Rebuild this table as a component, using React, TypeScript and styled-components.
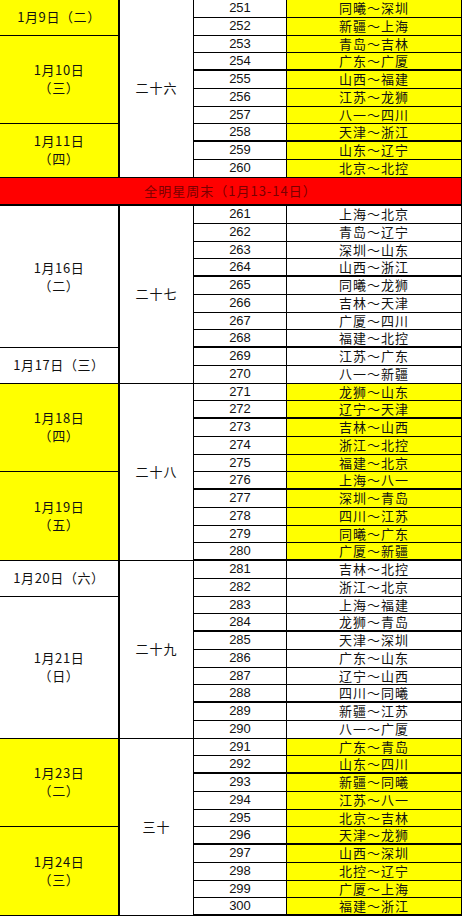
import React from "react";
import styled, { createGlobalStyle } from "styled-components";

const GlobalStyle = createGlobalStyle`
  html, body {
    margin: 0;
    padding: 0;
    background: #fff;
  }
`;

const YELLOW = "#ffff00";

interface Day {
  lines: string[];
  from: number;
  to: number;
  yellow: boolean;
}

const days: Day[] = [
  { lines: ["1月9日（二）"], from: 251, to: 252, yellow: true },
  { lines: ["1月10日", "（三）"], from: 253, to: 257, yellow: true },
  { lines: ["1月11日", "（四）"], from: 258, to: 260, yellow: true },
  { lines: ["1月16日", "（二）"], from: 261, to: 268, yellow: false },
  { lines: ["1月17日（三）"], from: 269, to: 270, yellow: false },
  { lines: ["1月18日", "（四）"], from: 271, to: 275, yellow: true },
  { lines: ["1月19日", "（五）"], from: 276, to: 280, yellow: true },
  { lines: ["1月20日（六）"], from: 281, to: 282, yellow: false },
  { lines: ["1月21日", "（日）"], from: 283, to: 290, yellow: false },
  { lines: ["1月23日", "（二）"], from: 291, to: 295, yellow: true },
  { lines: ["1月24日", "（三）"], from: 296, to: 300, yellow: true },
];

const rounds = [
  { name: "二十六", from: 251, to: 260 },
  { name: "二十七", from: 261, to: 270 },
  { name: "二十八", from: 271, to: 280 },
  { name: "二十九", from: 281, to: 290 },
  { name: "三十", from: 291, to: 300 },
];

const matches = [
  "同曦～深圳", "新疆～上海", "青岛～吉林", "广东～广厦", "山西～福建",
  "江苏～龙狮", "八一～四川", "天津～浙江", "山东～辽宁", "北京～北控",
  "上海～北京", "青岛～辽宁", "深圳～山东", "山西～浙江", "同曦～龙狮",
  "吉林～天津", "广厦～四川", "福建～北控", "江苏～广东", "八一～新疆",
  "龙狮～山东", "辽宁～天津", "吉林～山西", "浙江～北控", "福建～北京",
  "上海～八一", "深圳～青岛", "四川～江苏", "同曦～广东", "广厦～新疆",
  "吉林～北控", "浙江～北京", "上海～福建", "龙狮～青岛", "天津～深圳",
  "广东～山东", "辽宁～山西", "四川～同曦", "新疆～江苏", "八一～广厦",
  "广东～青岛", "山东～四川", "新疆～同曦", "江苏～八一", "北京～吉林",
  "天津～龙狮", "山西～深圳", "北控～辽宁", "广厦～上海", "福建～浙江",
];

// grid row of a game; the all-star banner sits on row 11
const rowOf = (n: number) => (n <= 260 ? n - 250 : n - 249);
const isThick = (n: number) => (n <= 260 ? (n - 250) % 4 === 0 : n % 4 === 0);
const isYellowGame = (n: number) =>
  (n >= 251 && n <= 260) || (n >= 271 && n <= 280) || (n >= 291 && n <= 300);

const Sheet = styled.div`
  display: grid;
  grid-template-columns: 120px 74px 93px 175px;
  grid-template-rows: repeat(10, 17.75px) 28.5px repeat(40, 17.75px);
  width: 462px;
  font-family: "Noto Sans CJK SC", "Noto Sans", sans-serif;
  font-size: 13px;
  line-height: 14px;
  color: #111;
`;

const Cell = styled.div<{ $row: number; $span?: number }>`
  grid-row: ${(p) => p.$row} / span ${(p) => p.$span ?? 1};
  box-sizing: border-box;
  display: flex;
  align-items: center;
  justify-content: center;
  text-align: center;
  border-bottom: 1px solid #000;
  border-right: 1px solid #000;
  white-space: nowrap;
`;

const DateCell = styled(Cell)<{ $yellow: boolean }>`
  grid-column: 1;
  flex-direction: column;
  line-height: 18px;
  letter-spacing: 0.6px;
  border-right: 2px solid #000;
  background: ${(p) => (p.$yellow ? YELLOW : "#fff")};
`;

const RoundCell = styled(Cell)`
  grid-column: 2;
  letter-spacing: 1px;
  background: #fff;
`;

const NumCell = styled(Cell)<{ $thick: boolean }>`
  grid-column: 3;
  font-family: "Liberation Sans", Arial, sans-serif;
  font-size: 13px;
  background: #fff;
  border-bottom-width: ${(p) => (p.$thick ? 2 : 1)}px;
`;

const MatchCell = styled(Cell)<{ $thick: boolean; $yellow: boolean }>`
  grid-column: 4;
  letter-spacing: 1px;
  background: ${(p) => (p.$yellow ? YELLOW : "#fff")};
  border-bottom-width: ${(p) => (p.$thick ? 2 : 1)}px;
`;

const Banner = styled(Cell)`
  grid-column: 1 / -1;
  background: #ff0000;
  color: #7a0000;
  letter-spacing: 1px;
  border-bottom: 2px solid #000;
`;

export default function App() {
  const games = matches.map((m, i) => ({ n: 251 + i, match: m }));

  return (
    <>
      <GlobalStyle />
      <Sheet>
        {days.map((d) => (
          <DateCell
            key={d.lines[0]}
            $row={rowOf(d.from)}
            $span={rowOf(d.to) - rowOf(d.from) + 1}
            $yellow={d.yellow}
          >
            {d.lines.map((l) => (
              <span key={l}>{l}</span>
            ))}
          </DateCell>
        ))}

        {rounds.map((r) => (
          <RoundCell
            key={r.name}
            $row={rowOf(r.from)}
            $span={rowOf(r.to) - rowOf(r.from) + 1}
          >
            {r.name}
          </RoundCell>
        ))}

        <Banner $row={11}>全明星周末（1月13-14日）</Banner>

        {games.map((g) => (
          <React.Fragment key={g.n}>
            <NumCell $row={rowOf(g.n)} $thick={isThick(g.n)}>
              {g.n}
            </NumCell>
            <MatchCell
              $row={rowOf(g.n)}
              $thick={isThick(g.n)}
              $yellow={isYellowGame(g.n)}
            >
              {g.match}
            </MatchCell>
          </React.Fragment>
        ))}
      </Sheet>
    </>
  );
}
